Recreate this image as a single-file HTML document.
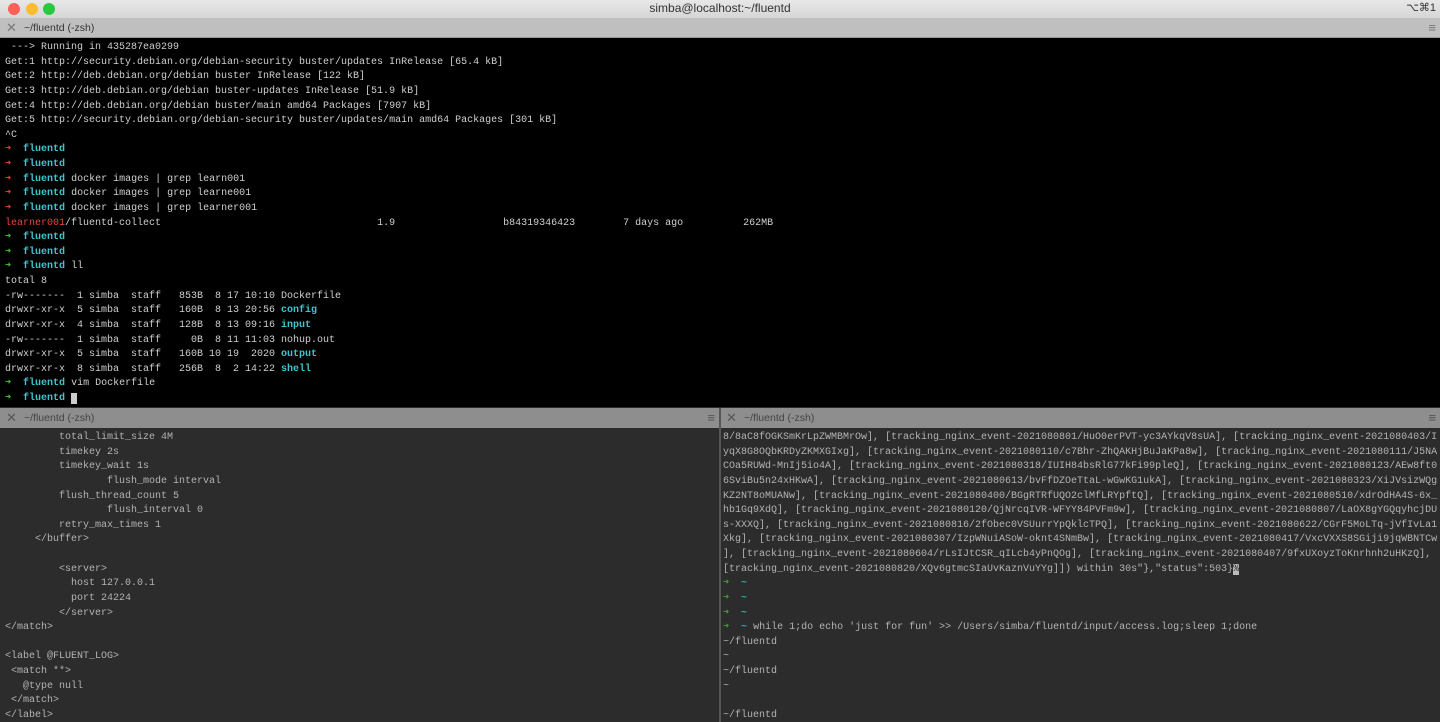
<!DOCTYPE html>
<html><head><meta charset="utf-8"><style>
*{margin:0;padding:0;box-sizing:border-box}
body{width:1440px;height:722px;overflow:hidden;background:#000;font-family:"Liberation Mono",monospace;position:relative}
.title{position:absolute;left:0;top:0;width:1440px;height:18px;background:linear-gradient(#e8e8e8,#d6d6d6);font:12px "Liberation Sans",sans-serif;color:#333;text-align:center;line-height:17px}
.dot{position:absolute;top:3px;width:12px;height:12px;border-radius:50%}
.tab{position:absolute;height:20px;font:10.5px "Liberation Sans",sans-serif;line-height:20px;padding-left:24px}
.tab .x{position:absolute;left:6px;top:0;font-size:13px}
.tab .h{position:absolute;right:4px;top:0;font-size:13px}
.pane{position:absolute;overflow:hidden;white-space:pre;font-size:10px;line-height:14.63px}
.c{color:#3ec5cf;font-weight:bold}.r{color:#e8453c}.g{color:#4cc53a}
.pane2 .c{color:#36a7b0}.pane2 .g{color:#3fa532}
</style></head><body>
<div class="title">simba@localhost:~/fluentd<span style="position:absolute;right:4px;font-size:11px">⌥⌘1</span></div>
<div class="dot" style="left:8px;background:#fc5f57"></div>
<div class="dot" style="left:26px;background:#fdbc2e"></div>
<div class="dot" style="left:43px;background:#29c840"></div>
<div class="tab" style="left:0;top:18px;width:1440px;background:#bfbfbf;color:#333;border-bottom:1px solid #999"><span class="x" style="color:#777">✕</span>~/fluentd (-zsh)<span class="h" style="color:#777">≡</span></div>
<div class="pane" style="left:5px;top:41px;width:1435px;height:366px;color:#cfcfcf"> ---&gt; Running in 435287ea0299
Get:1 http://security.debian.org/debian-security buster/updates InRelease [65.4 kB]
Get:2 http://deb.debian.org/debian buster InRelease [122 kB]
Get:3 http://deb.debian.org/debian buster-updates InRelease [51.9 kB]
Get:4 http://deb.debian.org/debian buster/main amd64 Packages [7907 kB]
Get:5 http://security.debian.org/debian-security buster/updates/main amd64 Packages [301 kB]
^C
<span class="r">➜</span>  <span class="c">fluentd</span>
<span class="r">➜</span>  <span class="c">fluentd</span>
<span class="r">➜</span>  <span class="c">fluentd</span> docker images | grep learn001
<span class="r">➜</span>  <span class="c">fluentd</span> docker images | grep learne001
<span class="r">➜</span>  <span class="c">fluentd</span> docker images | grep learner001
<span class="r">learner001</span>/fluentd-collect                                    1.9                  b84319346423        7 days ago          262MB
<span class="g">➜</span>  <span class="c">fluentd</span>
<span class="g">➜</span>  <span class="c">fluentd</span>
<span class="g">➜</span>  <span class="c">fluentd</span> ll
total 8
-rw-------  1 simba  staff   853B  8 17 10:10 Dockerfile
drwxr-xr-x  5 simba  staff   160B  8 13 20:56 <span class="c">config</span>
drwxr-xr-x  4 simba  staff   128B  8 13 09:16 <span class="c">input</span>
-rw-------  1 simba  staff     0B  8 11 11:03 nohup.out
drwxr-xr-x  5 simba  staff   160B 10 19  2020 <span class="c">output</span>
drwxr-xr-x  8 simba  staff   256B  8  2 14:22 <span class="c">shell</span>
<span class="g">➜</span>  <span class="c">fluentd</span> vim Dockerfile
<span class="g">➜</span>  <span class="c">fluentd</span> <span style="background:#ccc"> </span></div>
<div style="position:absolute;left:0;top:407px;width:1440px;height:315px;background:#2c2c2c"></div>
<div class="tab" style="left:0;top:408px;width:719px;background:#8e8e8e;color:#444"><span class="x" style="color:#555">✕</span>~/fluentd (-zsh)<span class="h" style="color:#555">≡</span></div>
<div class="tab" style="left:720px;top:408px;width:720px;background:#8e8e8e;color:#444"><span class="x" style="color:#555">✕</span>~/fluentd (-zsh)<span class="h" style="color:#555">≡</span></div>
<div style="position:absolute;left:719px;top:408px;width:2px;height:314px;background:#555"></div>
<div class="pane pane2" style="left:5px;top:431px;width:712px;height:291px;color:#b3b3b3">         total_limit_size 4M
         timekey 2s
         timekey_wait 1s
                 flush_mode interval
         flush_thread_count 5
                 flush_interval 0
         retry_max_times 1
     &lt;/buffer&gt;

         &lt;server&gt;
           host 127.0.0.1
           port 24224
         &lt;/server&gt;
&lt;/match&gt;

&lt;label @FLUENT_LOG&gt;
 &lt;match **&gt;
   @type null
 &lt;/match&gt;
&lt;/label&gt;</div>
<div class="pane pane2" style="left:723px;top:431px;width:717px;height:291px;color:#b3b3b3">8/8aC8fOGKSmKrLpZWMBMrOw], [tracking_nginx_event-2021080801/HuO0erPVT-yc3AYkqV8sUA], [tracking_nginx_event-2021080403/I
yqX8G8OQbKRDyZKMXGIxg], [tracking_nginx_event-2021080110/c7Bhr-ZhQAKHjBuJaKPa8w], [tracking_nginx_event-2021080111/J5NA
COa5RUWd-MnIj5io4A], [tracking_nginx_event-2021080318/IUIH84bsRlG77kFi99pleQ], [tracking_nginx_event-2021080123/AEw8ft0
6SviBu5n24xHKwA], [tracking_nginx_event-2021080613/bvFfDZOeTtaL-wGwKG1ukA], [tracking_nginx_event-2021080323/XiJVsizWQg
KZ2NT8oMUANw], [tracking_nginx_event-2021080400/BGgRTRfUQO2clMfLRYpftQ], [tracking_nginx_event-2021080510/xdrOdHA4S-6x_
hb1Gq9XdQ], [tracking_nginx_event-2021080120/QjNrcqIVR-WFYY84PVFm9w], [tracking_nginx_event-2021080807/LaOX8gYGQqyhcjDU
s-XXXQ], [tracking_nginx_event-2021080816/2fObec0VSUurrYpQklcTPQ], [tracking_nginx_event-2021080622/CGrF5MoLTq-jVfIvLa1
Xkg], [tracking_nginx_event-2021080307/IzpWNuiASoW-oknt4SNmBw], [tracking_nginx_event-2021080417/VxcVXXS8SGiji9jqWBNTCw
], [tracking_nginx_event-2021080604/rLsIJtCSR_qILcb4yPnQOg], [tracking_nginx_event-2021080407/9fxUXoyzToKnrhnh2uHKzQ],
[tracking_nginx_event-2021080820/XQv6gtmcSIaUvKaznVuYYg]]) within 30s"},"status":503}<span style="background:#bbb;color:#2c2c2c">%</span>
<span class="g">➜</span>  <span class="c">~</span>
<span class="g">➜</span>  <span class="c">~</span>
<span class="g">➜</span>  <span class="c">~</span>
<span class="g">➜</span>  <span class="c">~</span> while 1;do echo 'just for fun' &gt;&gt; /Users/simba/fluentd/input/access.log;sleep 1;done
~/fluentd
~
~/fluentd
~

~/fluentd</div>
</body></html>
